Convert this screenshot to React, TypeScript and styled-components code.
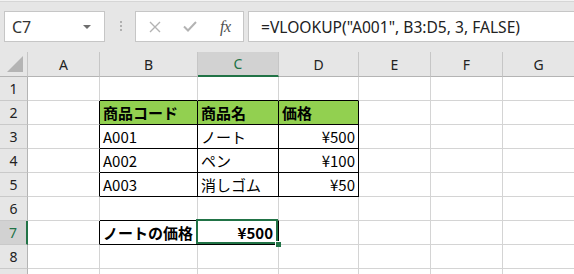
import React from 'react';
import styled, { createGlobalStyle } from 'styled-components';

const UI_FONT = '"Noto Sans", "Liberation Sans", sans-serif';
const CELL_FONT = '"Noto Sans CJK JP", "Noto Sans", sans-serif';
const ACCENT = '#217346';

const COLUMNS = [
  { key: 'A', width: 72 },
  { key: 'B', width: 98 },
  { key: 'C', width: 81 },
  { key: 'D', width: 80 },
  { key: 'E', width: 72 },
  { key: 'F', width: 72 },
  { key: 'G', width: 72 },
];
const ROW_COUNT = 9;
const ACTIVE = { col: 'C', row: 7 };

type CellData = { text: string; bold?: boolean; right?: boolean; fill?: string };

const HEADER_FILL = '#92d050';

const CELLS: Record<string, CellData> = {
  B2: { text: '商品コード', bold: true, fill: HEADER_FILL },
  C2: { text: '商品名', bold: true, fill: HEADER_FILL },
  D2: { text: '価格', bold: true, fill: HEADER_FILL },
  B3: { text: 'A001' },
  C3: { text: 'ノート' },
  D3: { text: '¥500', right: true },
  B4: { text: 'A002' },
  C4: { text: 'ペン' },
  D4: { text: '¥100', right: true },
  B5: { text: 'A003' },
  C5: { text: '消しゴム' },
  D5: { text: '¥50', right: true },
  B7: { text: 'ノートの価格', bold: true },
  C7: { text: '¥500', bold: true, right: true },
};

// cells that carry a thin black border on all sides
const BOXED = new Set([
  'B2', 'C2', 'D2', 'B3', 'C3', 'D3', 'B4', 'C4', 'D4', 'B5', 'C5', 'D5', 'B7', 'C7',
]);

const isBoxed = (row: number, col: number) => {
  const c = COLUMNS[col];
  return c ? BOXED.has(c.key + row) : false;
};

const GlobalStyle = createGlobalStyle`
  html, body {
    margin: 0;
    padding: 0;
    background: #ffffff;
    overflow: hidden;
  }
`;

const Page = styled.div`
  width: 574px;
  height: 274px;
  overflow: hidden;
  background: #ffffff;
`;

const Toolbar = styled.div`
  box-sizing: border-box;
  height: 52px;
  display: flex;
  align-items: flex-start;
  padding: 10px 0 0 4px;
  background: #e6e6e6;
  border-top: 1px solid #f3f3f3;
  box-shadow: inset 0 1px 0 #d6d6d6;
  font-family: ${UI_FONT};
`;

const FieldBox = styled.div`
  box-sizing: border-box;
  height: 31px;
  background: #ffffff;
  border: 1px solid #c6c6c6;
  display: flex;
  align-items: center;
`;

const NameBox = styled(FieldBox)`
  width: 101px;
  justify-content: space-between;
  padding: 0 13px 0 7px;
  font-size: 16px;
  color: #333333;
`;

const DropArrow = styled.span`
  width: 0;
  height: 0;
  border-left: 4px solid transparent;
  border-right: 4px solid transparent;
  border-top: 4px solid #6e6e6e;
`;

const Grip = styled.div`
  display: flex;
  flex-direction: column;
  gap: 2px;
  margin: 10px 13px 0 15px;

  span {
    width: 2px;
    height: 2px;
    background: #b0b0b0;
  }
`;

const FxBox = styled(FieldBox)`
  width: 109px;
  padding-left: 12px;
  gap: 21px;
`;

const IconSlot = styled.span`
  display: flex;
  align-items: center;
  justify-content: center;
  width: 14px;
  height: 14px;
`;

const FxLabel = styled.span`
  font-family: 'Liberation Serif', serif;
  font-style: italic;
  font-size: 16px;
  letter-spacing: -0.5px;
  color: #505050;
  margin-left: 2px;
`;

const FormulaBox = styled(FieldBox)`
  flex: 1;
  margin-left: 4px;
  border-right: none;
  padding-left: 12px;
  font-size: 15.6px;
  color: #222222;
  white-space: nowrap;
`;

const Sheet = styled.div`
  display: grid;
  grid-template-columns: 28px ${COLUMNS.map((c) => `${c.width}px`).join(' ')};
  grid-template-rows: 25px repeat(${ROW_COUNT}, 24px);
`;

const Corner = styled.div`
  box-sizing: border-box;
  background: #e6e6e6;
  border-right: 1px solid #c6c6c6;
  border-bottom: 1px solid #b4b4b4;
  display: flex;
  align-items: flex-end;
  justify-content: flex-end;
  padding: 0 4px 4px 0;
`;

const CornerMark = styled.span`
  width: 0;
  height: 0;
  border-left: 16px solid transparent;
  border-bottom: 16px solid #b4b4b4;
`;

const ColHead = styled.div<{ $selected: boolean }>`
  box-sizing: border-box;
  display: flex;
  align-items: center;
  justify-content: center;
  background: ${({ $selected }) => ($selected ? '#d2d2d2' : '#e6e6e6')};
  border-right: 1px solid #c6c6c6;
  border-bottom: ${({ $selected }) => ($selected ? `2px solid ${ACCENT}` : '1px solid #b4b4b4')};
  font-family: ${UI_FONT};
  font-size: 14px;
  color: ${({ $selected }) => ($selected ? ACCENT : '#222222')};
`;

const RowHead = styled.div<{ $selected: boolean }>`
  box-sizing: border-box;
  display: flex;
  align-items: center;
  justify-content: center;
  background: ${({ $selected }) => ($selected ? '#d2d2d2' : '#e6e6e6')};
  border-right: ${({ $selected }) => ($selected ? `2px solid ${ACCENT}` : '1px solid #b4b4b4')};
  border-bottom: 1px solid #c9c9c9;
  font-family: ${UI_FONT};
  font-size: 14px;
  color: ${({ $selected }) => ($selected ? ACCENT : '#222222')};
`;

type CellProps = {
  $right: string;
  $bottom: string;
  $fill?: string;
  $bold?: boolean;
  $alignRight?: boolean;
  $active?: boolean;
};

const Cell = styled.div<CellProps>`
  box-sizing: border-box;
  position: relative;
  display: flex;
  align-items: center;
  justify-content: ${({ $alignRight }) => ($alignRight ? 'flex-end' : 'flex-start')};
  padding: ${({ $active }) => ($active ? '0 5px 1px 3px' : '0 3px 1px 3px')};
  background: ${({ $fill }) => $fill || '#ffffff'};
  border-right: 1px solid ${({ $right }) => $right};
  border-bottom: 1px solid ${({ $bottom }) => $bottom};
  font-family: ${CELL_FONT};
  font-size: 15px;
  font-weight: ${({ $bold }) => ($bold ? 700 : 400)};
  color: #000000;
  white-space: nowrap;
  z-index: ${({ $active }) => ($active ? 2 : 'auto')};

  ${({ $active }) =>
    $active &&
    `
    &::after {
      content: '';
      position: absolute;
      top: -2px;
      left: -2px;
      right: 0;
      bottom: 0;
      border: 2px solid ${ACCENT};
    }
    &::before {
      content: '';
      position: absolute;
      right: -3px;
      bottom: -3px;
      width: 5px;
      height: 5px;
      background: ${ACCENT};
      border-left: 1px solid #ffffff;
      border-top: 1px solid #ffffff;
      z-index: 1;
    }
  `}
`;

const GRID_LINE = '#d4d4d4';

const CancelIcon = () => (
  <svg width="12" height="12" viewBox="0 0 12 12">
    <path d="M1 1 L11 11 M11 1 L1 11" stroke="#b3b3b3" strokeWidth="1.4" fill="none" />
  </svg>
);

const EnterIcon = () => (
  <svg width="14" height="11" viewBox="0 0 14 11">
    <path d="M1 5.5 L5 9.5 L13 1" stroke="#b3b3b3" strokeWidth="2" fill="none" />
  </svg>
);

const App: React.FC = () => {
  const rows = Array.from({ length: ROW_COUNT }, (_, i) => i + 1);

  return (
    <Page>
      <GlobalStyle />
      <Toolbar>
        <NameBox>
          <span>C7</span>
          <DropArrow />
        </NameBox>
        <Grip>
          <span />
          <span />
          <span />
        </Grip>
        <FxBox>
          <IconSlot>
            <CancelIcon />
          </IconSlot>
          <IconSlot>
            <EnterIcon />
          </IconSlot>
          <FxLabel>fx</FxLabel>
        </FxBox>
        <FormulaBox>=VLOOKUP("A001", B3:D5, 3, FALSE)</FormulaBox>
      </Toolbar>

      <Sheet>
        <Corner>
          <CornerMark />
        </Corner>
        {COLUMNS.map((c) => (
          <ColHead key={c.key} $selected={c.key === ACTIVE.col}>
            {c.key}
          </ColHead>
        ))}

        {rows.map((row) => (
          <React.Fragment key={row}>
            <RowHead $selected={row === ACTIVE.row}>{row}</RowHead>
            {COLUMNS.map((c, ci) => {
              const id = c.key + row;
              const data = CELLS[id];
              const right = isBoxed(row, ci) || isBoxed(row, ci + 1) ? '#000000' : GRID_LINE;
              const bottom = isBoxed(row, ci) || isBoxed(row + 1, ci) ? '#000000' : GRID_LINE;
              const active = c.key === ACTIVE.col && row === ACTIVE.row;
              return (
                <Cell
                  key={id}
                  $right={right}
                  $bottom={bottom}
                  $fill={data?.fill}
                  $bold={data?.bold}
                  $alignRight={data?.right}
                  $active={active}
                >
                  {data?.text}
                </Cell>
              );
            })}
          </React.Fragment>
        ))}
      </Sheet>
    </Page>
  );
};

export default App;
